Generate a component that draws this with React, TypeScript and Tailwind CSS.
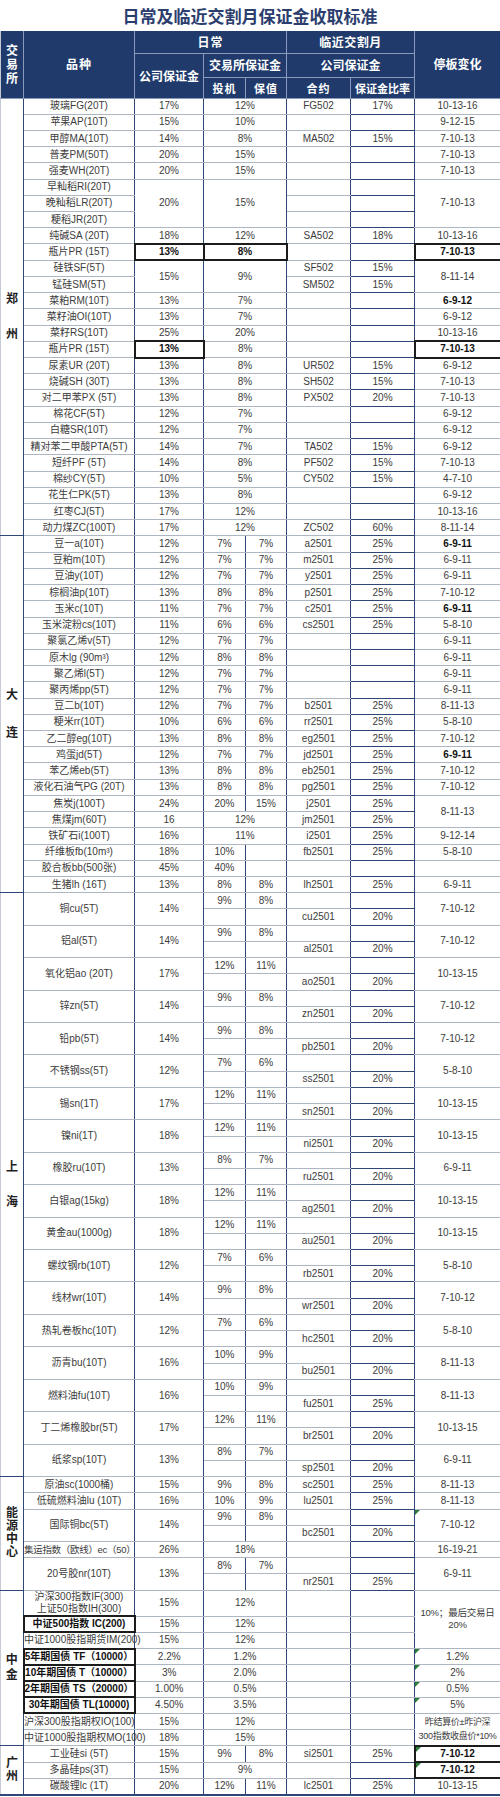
import React from "react";

// 表格边框：竖线深蓝，横线浅灰，保证金比率列横线深蓝
type K = "g" | "n" | "t";

const CLS: Record<K, string> = {
  g: "relative p-0 text-center align-middle whitespace-nowrap border-r border-b border-r-[#2e4776] border-b-[#aeb6c4]",
  n: "relative p-0 text-center align-middle whitespace-nowrap border-r border-b border-r-[#2e4776] border-b-[#2e4776]",
  t: "relative p-0 text-center align-middle whitespace-nowrap border-2 border-[#1c1c1c]",
};

const HD =
  "p-0 text-center align-middle whitespace-nowrap bg-[#203a6b] text-white font-bold border-r border-b border-[#8a9abb]";

const RH = "h-[16.23px]";

type CP = {
  children?: React.ReactNode;
  k?: K;
  cs?: number;
  rs?: number;
  b?: boolean;
  tri?: boolean;
};

function C({ children, k = "g", cs, rs, b, tri }: CP) {
  return (
    <td colSpan={cs} rowSpan={rs} className={CLS[k] + (b ? " font-bold text-[#111]" : "")}>
      {tri && (
        <span className="absolute left-0 top-0 h-0 w-0 border-t-[5px] border-r-[5px] border-t-[#2f7d3a] border-r-transparent" />
      )}
      {children}
    </td>
  );
}

function Ex({ t, rs, gap }: { t: string; rs: number; gap: string }) {
  return (
    <td rowSpan={rs} className={CLS.n}>
      <div className={"flex flex-col items-center text-[12px] font-bold leading-[13px] text-[#1e1e1e] " + gap}>
        {t.split("").map((ch, i) => (
          <span key={i}>{ch}</span>
        ))}
      </div>
    </td>
  );
}

type ZP = {
  n: string;
  co: string;
  ex: string;
  ct?: string;
  ra?: string;
  lim: string;
  lead?: React.ReactNode;
  lb?: boolean;
};

// 郑商所：交易所保证金合并两列
function Z({ n, co, ex, ct = "", ra = "", lim, lead, lb }: ZP) {
  return (
    <tr className={RH}>
      {lead}
      <C>{n}</C>
      <C>{co}</C>
      <C cs={2}>{ex}</C>
      <C>{ct}</C>
      <C k="n">{ra}</C>
      <C b={lb}>{lim}</C>
    </tr>
  );
}

type DP = {
  n: React.ReactNode;
  co: string;
  sp: string;
  hd?: string;
  ct?: string;
  ra?: string;
  lim?: string;
  lead?: React.ReactNode;
  lb?: boolean;
  lrs?: number;
  noLim?: boolean;
  merge?: boolean;
  tri?: boolean;
};

function D({ n, co, sp, hd = "", ct = "", ra = "", lim = "", lead, lb, lrs, noLim, merge, tri }: DP) {
  return (
    <tr className={RH}>
      {lead}
      <C>{n}</C>
      <C>{co}</C>
      {merge ? (
        <C cs={2}>{sp}</C>
      ) : (
        <>
          <C>{sp}</C>
          <C>{hd}</C>
        </>
      )}
      <C>{ct}</C>
      <C k="n">{ra}</C>
      {!noLim && (
        <C rs={lrs} b={lb} tri={tri}>
          {lim}
        </C>
      )}
    </tr>
  );
}

type SP = {
  n: string;
  co: string;
  sp: string;
  hd: string;
  ct: string;
  ra: string;
  lim: string;
  lead?: React.ReactNode;
  tri?: boolean;
};

// 上期所：每个品种分两行，上行交易所保证金，下行合约
function S({ n, co, sp, hd, ct, ra, lim, lead, tri }: SP) {
  return (
    <>
      <tr className={RH}>
        {lead}
        <C rs={2}>{n}</C>
        <C rs={2}>{co}</C>
        <C>{sp}</C>
        <C>{hd}</C>
        <C />
        <C k="n" />
        <C rs={2} tri={tri}>
          {lim}
        </C>
      </tr>
      <tr className={RH}>
        <C />
        <C />
        <C>{ct}</C>
        <C k="n">{ra}</C>
      </tr>
    </>
  );
}

const SHFE: [string, string, string, string, string, string, string][] = [
  ["铜cu(5T)", "14%", "9%", "8%", "cu2501", "20%", "7-10-12"],
  ["铝al(5T)", "14%", "9%", "8%", "al2501", "20%", "7-10-12"],
  ["氧化铝ao (20T)", "17%", "12%", "11%", "ao2501", "20%", "10-13-15"],
  ["锌zn(5T)", "14%", "9%", "8%", "zn2501", "20%", "7-10-12"],
  ["铅pb(5T)", "14%", "9%", "8%", "pb2501", "20%", "7-10-12"],
  ["不锈钢ss(5T)", "12%", "7%", "6%", "ss2501", "20%", "5-8-10"],
  ["锡sn(1T)", "17%", "12%", "11%", "sn2501", "20%", "10-13-15"],
  ["镍ni(1T)", "18%", "12%", "11%", "ni2501", "20%", "10-13-15"],
  ["橡胶ru(10T)", "13%", "8%", "7%", "ru2501", "20%", "6-9-11"],
  ["白银ag(15kg)", "18%", "12%", "11%", "ag2501", "20%", "10-13-15"],
  ["黄金au(1000g)", "18%", "12%", "11%", "au2501", "20%", "10-13-15"],
  ["螺纹钢rb(10T)", "12%", "7%", "6%", "rb2501", "20%", "5-8-10"],
  ["线材wr(10T)", "14%", "9%", "8%", "wr2501", "20%", "7-10-12"],
  ["热轧卷板hc(10T)", "12%", "7%", "6%", "hc2501", "20%", "5-8-10"],
  ["沥青bu(10T)", "16%", "10%", "9%", "bu2501", "20%", "8-11-13"],
  ["燃料油fu(10T)", "16%", "10%", "9%", "fu2501", "25%", "8-11-13"],
  ["丁二烯橡胶br(5T)", "17%", "12%", "11%", "br2501", "20%", "10-13-15"],
  ["纸浆sp(10T)", "13%", "8%", "7%", "sp2501", "20%", "6-9-11"],
];

function App() {
  return (
    <div className="w-[500px] bg-white font-['Liberation_Sans_Narrow','Liberation_Sans','Noto_Sans_CJK_SC',sans-serif]">
      <div className="flex h-[31px] items-center justify-center font-['Noto_Sans_CJK_SC',sans-serif] text-[17px] font-bold text-[#2c3e6e]">
        日常及临近交割月保证金收取标准
      </div>
      <table className="w-[500px] table-fixed border-collapse border-l border-l-[#c5cad3] border-b-2 border-b-[#2e4776] text-[10px] leading-[14px] text-[#3c3c3c]">
        <colgroup>
          <col className="w-[23px]" />
          <col className="w-[111px]" />
          <col className="w-[69px]" />
          <col className="w-[42px]" />
          <col className="w-[41px]" />
          <col className="w-[64px]" />
          <col className="w-[64px]" />
          <col className="w-[86px]" />
        </colgroup>
        <thead className="font-['Noto_Sans_CJK_SC',sans-serif]">
          <tr className="h-[22px]">
            <th rowSpan={3} className={HD}>
              <div className="flex flex-col items-center text-[12px] leading-[14px]">
                <span>交</span>
                <span>易</span>
                <span>所</span>
              </div>
            </th>
            <th rowSpan={3} className={HD + " text-[12px] tracking-[1px]"}>
              品种
            </th>
            <th colSpan={3} className={HD + " text-[12px] tracking-[1px]"}>
              日常
            </th>
            <th colSpan={2} className={HD + " text-[12px] tracking-[0.5px]"}>
              临近交割月
            </th>
            <th rowSpan={3} className={HD + " text-[12px]"}>
              停板变化
            </th>
          </tr>
          <tr className="h-[24px]">
            <th rowSpan={2} className={HD + " text-[12px]"}>
              公司保证金
            </th>
            <th colSpan={2} className={HD + " text-[12px]"}>
              交易所保证金
            </th>
            <th colSpan={2} className={HD + " text-[12px]"}>
              公司保证金
            </th>
          </tr>
          <tr className="h-[21px]">
            <th className={HD + " text-[11px] tracking-[1px]"}>投机</th>
            <th className={HD + " text-[11px] tracking-[1px]"}>保值</th>
            <th className={HD + " text-[11px] tracking-[1px]"}>合约</th>
            <th className={HD + " text-[11px]"}>保证金比率</th>
          </tr>
        </thead>
        <tbody>
          {/* 郑州 */}
          <Z lead={<Ex t="郑州" rs={27} gap="gap-[22px]" />} n="玻璃FG(20T)" co="17%" ex="12%" ct="FG502" ra="17%" lim="10-13-16" />
          <Z n="苹果AP(10T)" co="15%" ex="10%" lim="9-12-15" />
          <Z n="甲醇MA(10T)" co="14%" ex="8%" ct="MA502" ra="15%" lim="7-10-13" />
          <Z n="普麦PM(50T)" co="20%" ex="15%" lim="7-10-13" />
          <Z n="强麦WH(20T)" co="20%" ex="15%" lim="7-10-13" />
          <tr className={RH}>
            <C>早籼稻RI(20T)</C>
            <C rs={3}>20%</C>
            <C rs={3} cs={2}>
              15%
            </C>
            <C />
            <C k="n" />
            <C rs={3}>7-10-13</C>
          </tr>
          <tr className={RH}>
            <C>晚籼稻LR(20T)</C>
            <C />
            <C k="n" />
          </tr>
          <tr className={RH}>
            <C>粳稻JR(20T)</C>
            <C />
            <C k="n" />
          </tr>
          <Z n="纯碱SA (20T)" co="18%" ex="12%" ct="SA502" ra="18%" lim="10-13-16" />
          <tr className={RH}>
            <C>瓶片PR (15T)</C>
            <C k="t" b>
              13%
            </C>
            <C k="t" b cs={2}>
              8%
            </C>
            <C />
            <C k="n" />
            <C k="t" b>
              7-10-13
            </C>
          </tr>
          <tr className={RH}>
            <C>硅铁SF(5T)</C>
            <C rs={2}>15%</C>
            <C rs={2} cs={2}>
              9%
            </C>
            <C>SF502</C>
            <C k="n">15%</C>
            <C rs={2}>8-11-14</C>
          </tr>
          <tr className={RH}>
            <C>锰硅SM(5T)</C>
            <C>SM502</C>
            <C k="n">15%</C>
          </tr>
          <Z n="菜粕RM(10T)" co="13%" ex="7%" lim="6-9-12" lb />
          <Z n="菜籽油OI(10T)" co="13%" ex="7%" lim="6-9-12" />
          <Z n="菜籽RS(10T)" co="25%" ex="20%" lim="10-13-16" />
          <tr className={RH}>
            <C>瓶片PR (15T)</C>
            <C k="t" b>
              13%
            </C>
            <C cs={2}>8%</C>
            <C />
            <C k="n" />
            <C k="t" b>
              7-10-13
            </C>
          </tr>
          <Z n="尿素UR (20T)" co="13%" ex="8%" ct="UR502" ra="15%" lim="6-9-12" />
          <Z n="烧碱SH (30T)" co="13%" ex="8%" ct="SH502" ra="15%" lim="7-10-13" />
          <Z n="对二甲苯PX (5T)" co="13%" ex="8%" ct="PX502" ra="20%" lim="7-10-13" />
          <Z n="棉花CF(5T)" co="12%" ex="7%" lim="6-9-12" />
          <Z n="白糖SR(10T)" co="12%" ex="7%" lim="6-9-12" />
          <Z n="精对苯二甲酸PTA(5T)" co="14%" ex="7%" ct="TA502" ra="15%" lim="6-9-12" />
          <Z n="短纤PF (5T)" co="14%" ex="8%" ct="PF502" ra="15%" lim="7-10-13" />
          <Z n="棉纱CY(5T)" co="10%" ex="5%" ct="CY502" ra="15%" lim="4-7-10" />
          <Z n="花生仁PK(5T)" co="13%" ex="8%" lim="6-9-12" />
          <Z n="红枣CJ(5T)" co="17%" ex="12%" lim="10-13-16" />
          <Z n="动力煤ZC(100T)" co="17%" ex="12%" ct="ZC502" ra="60%" lim="8-11-14" />

          {/* 大连 */}
          <D lead={<Ex t="大连" rs={22} gap="gap-[25px]" />} n="豆一a(10T)" co="12%" sp="7%" hd="7%" ct="a2501" ra="25%" lim="6-9-11" lb />
          <D n="豆粕m(10T)" co="12%" sp="7%" hd="7%" ct="m2501" ra="25%" lim="6-9-11" />
          <D n="豆油y(10T)" co="12%" sp="7%" hd="7%" ct="y2501" ra="25%" lim="6-9-11" />
          <D n="棕榈油p(10T)" co="13%" sp="8%" hd="8%" ct="p2501" ra="25%" lim="7-10-12" />
          <D n="玉米c(10T)" co="11%" sp="7%" hd="7%" ct="c2501" ra="25%" lim="6-9-11" lb />
          <D n="玉米淀粉cs(10T)" co="11%" sp="6%" hd="6%" ct="cs2501" ra="25%" lim="5-8-10" />
          <D n="聚氯乙烯v(5T)" co="12%" sp="7%" hd="7%" lim="6-9-11" />
          <D n="原木lg (90m³)" co="12%" sp="8%" hd="8%" lim="6-9-11" />
          <D n="聚乙烯l(5T)" co="12%" sp="7%" hd="7%" lim="6-9-11" />
          <D n="聚丙烯pp(5T)" co="12%" sp="7%" hd="7%" lim="6-9-11" />
          <D n="豆二b(10T)" co="12%" sp="7%" hd="7%" ct="b2501" ra="25%" lim="8-11-13" />
          <D n="粳米rr(10T)" co="10%" sp="6%" hd="6%" ct="rr2501" ra="25%" lim="5-8-10" />
          <D n="乙二醇eg(10T)" co="13%" sp="8%" hd="8%" ct="eg2501" ra="25%" lim="7-10-12" />
          <D n="鸡蛋jd(5T)" co="12%" sp="7%" hd="7%" ct="jd2501" ra="25%" lim="6-9-11" lb />
          <D n="苯乙烯eb(5T)" co="13%" sp="8%" hd="8%" ct="eb2501" ra="25%" lim="7-10-12" />
          <D n="液化石油气PG (20T)" co="13%" sp="8%" hd="8%" ct="pg2501" ra="25%" lim="7-10-12" />
          <D n="焦炭j(100T)" co="24%" sp="20%" hd="15%" ct="j2501" ra="25%" lim="8-11-13" lrs={2} />
          <D n="焦煤jm(60T)" co="16" sp="12%" merge ct="jm2501" ra="25%" noLim />
          <D n="铁矿石i(100T)" co="16%" sp="11%" merge ct="i2501" ra="25%" lim="9-12-14" />
          <D n="纤维板fb(10m³)" co="18%" sp="10%" ct="fb2501" ra="25%" lim="5-8-10" />
          <D n="胶合板bb(500张)" co="45%" sp="40%" />
          <D n="生猪lh (16T)" co="13%" sp="8%" hd="8%" ct="lh2501" ra="25%" lim="6-9-11" />

          {/* 上海 */}
          {SHFE.map(([n, co, sp, hd, ct, ra, lim], i) => (
            <S
              key={ct}
              lead={i === 0 ? <Ex t="上海" rs={36} gap="gap-[22px]" /> : undefined}
              n={n}
              co={co}
              sp={sp}
              hd={hd}
              ct={ct}
              ra={ra}
              lim={lim}
            />
          ))}

          {/* 能源中心 */}
          <D lead={<Ex t="能源中心" rs={7} gap="gap-0" />} n="原油sc(1000桶)" co="15%" sp="9%" hd="8%" ct="sc2501" ra="25%" lim="8-11-13" />
          <D n="低硫燃料油lu (10T)" co="16%" sp="10%" hd="9%" ct="lu2501" ra="25%" lim="8-11-13" />
          <S n="国际铜bc(5T)" co="14%" sp="9%" hd="8%" ct="bc2501" ra="20%" lim="7-10-12" tri />
          <D
            n={<span className="text-[9.5px] tracking-[-0.3px]">集运指数（欧线）ec（50）</span>}
            co="26%"
            sp="18%"
            merge
            lim="16-19-21"
          />
          <S n="20号胶nr(10T)" co="13%" sp="8%" hd="7%" ct="nr2501" ra="25%" lim="6-9-11" />

          {/* 中金 */}
          <tr className="h-[26px]">
            <Ex t="中金" rs={9} gap="gap-[2px]" />
            <C>
              <div className="leading-[12px]">
                沪深300指数IF(300)
                <br />
                上证50指数IH(300)
              </div>
            </C>
            <C>15%</C>
            <C cs={2}>12%</C>
            <C />
            <C />
            <C rs={3}>
              <div className="text-[9.5px] leading-[12px] tracking-[-0.2px]">
                10%；最后交易日
                <br />
                20%
              </div>
            </C>
          </tr>
          <tr className={RH}>
            <C k="t" b>
              中证500指数 IC(200)
            </C>
            <C>15%</C>
            <C cs={2}>12%</C>
            <C />
            <C />
          </tr>
          <tr className={RH}>
            <C>中证1000股指期货IM(200)</C>
            <C>15%</C>
            <C cs={2}>12%</C>
            <C />
            <C />
          </tr>
          <tr className={RH}>
            <C k="t" b>
              5年期国债 TF（10000）
            </C>
            <C>2.2%</C>
            <C cs={2}>1.2%</C>
            <C />
            <C />
            <C tri>1.2%</C>
          </tr>
          <tr className={RH}>
            <C k="t" b>
              10年期国债 T（10000）
            </C>
            <C>3%</C>
            <C cs={2}>2.0%</C>
            <C />
            <C />
            <C tri>2%</C>
          </tr>
          <tr className={RH}>
            <C k="t" b>
              2年期国债 TS（20000）
            </C>
            <C>1.00%</C>
            <C cs={2}>0.5%</C>
            <C />
            <C />
            <C tri>0.5%</C>
          </tr>
          <tr className={RH}>
            <C k="t" b>
              30年期国债 TL(10000)
            </C>
            <C>4.50%</C>
            <C cs={2}>3.5%</C>
            <C />
            <C />
            <C tri>5%</C>
          </tr>
          <tr className={RH}>
            <C>沪深300股指期权IO(100)</C>
            <C>15%</C>
            <C cs={2}>12%</C>
            <C />
            <C />
            <C rs={2}>
              <div className="text-[9px] leading-[14px] tracking-[-0.3px]">
                昨结算价±昨沪深
                <br />
                300指数收盘价*10%
              </div>
            </C>
          </tr>
          <tr className={RH}>
            <C>中证1000股指期权MO(100)</C>
            <C>18%</C>
            <C cs={2}>15%</C>
            <C />
            <C />
          </tr>

          {/* 广州 */}
          <tr className={RH}>
            <Ex t="广州" rs={3} gap="gap-0" />
            <C>工业硅si (5T)</C>
            <C>15%</C>
            <C>9%</C>
            <C>8%</C>
            <C>si2501</C>
            <C k="n">25%</C>
            <C k="t" b tri>
              7-10-12
            </C>
          </tr>
          <tr className={RH}>
            <C>多晶硅ps(3T)</C>
            <C>15%</C>
            <C cs={2}>9%</C>
            <C />
            <C k="n" />
            <C k="t" b tri>
              7-10-12
            </C>
          </tr>
          <tr className={RH}>
            <C>碳酸锂lc (1T)</C>
            <C>20%</C>
            <C>12%</C>
            <C>11%</C>
            <C>lc2501</C>
            <C k="n">25%</C>
            <C>10-13-15</C>
          </tr>
        </tbody>
      </table>
    </div>
  );
}

export default App;
